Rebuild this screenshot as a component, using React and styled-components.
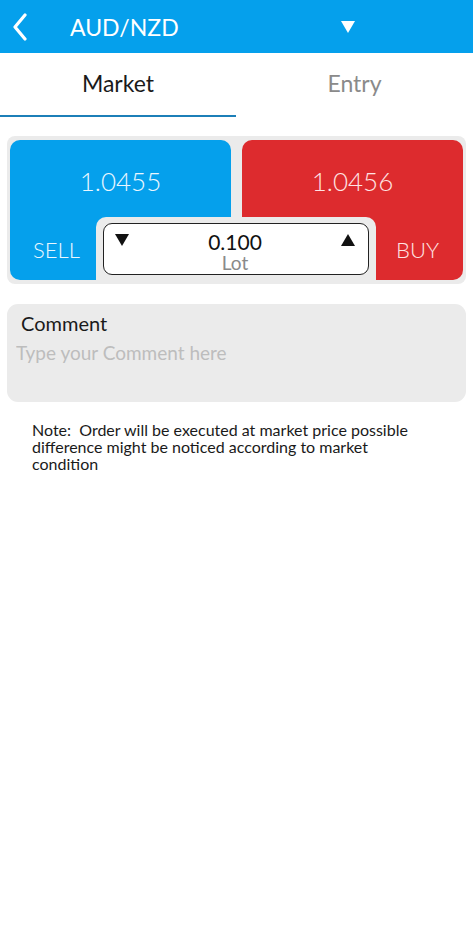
import React, { useState } from "react";
import styled, { createGlobalStyle } from "styled-components";

const GlobalStyle = createGlobalStyle`
  html, body {
    margin: 0;
    padding: 0;
    background: #fff;
  }
  body {
    font-family: Lato, "Open Sans", sans-serif;
  }
`;

const Page = styled.div`
  width: 473px;
  min-height: 931px;
  background: #fff;
`;

const Header = styled.header`
  height: 53px;
  background: #05a0ec;
  display: flex;
  align-items: center;
  color: #fff;
  padding-left: 12px;
  box-sizing: border-box;
`;

const BackBtn = styled.button`
  border: none;
  background: transparent;
  padding: 0;
  width: 16px;
  height: 28px;
  display: flex;
  align-items: center;
`;

const Title = styled.div`
  font-size: 23px;
  margin-left: 42px;
  width: 270px;
`;

const Tabs = styled.div`
  display: flex;
  height: 64px;
`;

const Tab = styled.div`
  flex: 0 0 ${(p) => p.$w}px;
  display: flex;
  align-items: center;
  justify-content: center;
  font-size: 23px;
  color: ${(p) => (p.$active ? "#1a1a1a" : "#8a8a8a")};
  border-bottom: 2px solid ${(p) => (p.$active ? "#1c7fb8" : "transparent")};
  box-sizing: border-box;
  padding-bottom: 2px;
  cursor: pointer;
`;

const TradePanel = styled.div`
  position: relative;
  margin: 19px 7px 0;
  padding: 4px 3px;
  background: #ebebeb;
  border-radius: 8px;
  display: flex;
  gap: 11px;
  height: 148px;
  box-sizing: border-box;
`;

const SideBox = styled.div`
  flex: 1;
  background: ${(p) => p.$color};
  border-radius: 10px;
  color: #fff;
  display: flex;
  flex-direction: column;
  justify-content: space-between;
`;

const Price = styled.div`
  font-size: 26px;
  font-weight: 300;
  text-align: center;
  margin-top: 25px;
  color: ${(p) => p.$tint};
`;

const SideLabel = styled.div`
  font-size: 22px;
  font-weight: 300;
  text-align: ${(p) => p.$align};
  padding: ${(p) => (p.$align === "left" ? "0 0 0 23px" : "0 24px 0 0")};
  margin-bottom: 17px;
  color: ${(p) => p.$tint};
`;

const LotWrap = styled.div`
  position: absolute;
  left: 89px;
  top: 81px;
  width: 280px;
  height: 67px;
  background: #ebebeb;
  border-radius: 10px 10px 0 0;
  padding: 6px 7px 0;
  box-sizing: border-box;
`;

const LotBox = styled.div`
  height: 52px;
  background: #fff;
  border: 1.5px solid #222;
  border-radius: 9px;
  box-sizing: border-box;
  display: flex;
  align-items: flex-start;
  justify-content: space-between;
  padding: 7px 12px 0 10px;
`;

const Arrow = styled.button`
  border: none;
  background: transparent;
  padding: 0;
  width: 16px;
  height: 14px;
  margin-top: 2px;
  display: flex;
  cursor: pointer;
`;

const LotValue = styled.div`
  display: flex;
  flex-direction: column;
  align-items: center;
`;

const LotNumber = styled.div`
  font-size: 21px;
  line-height: 21px;
  color: #111;
`;

const LotLabel = styled.div`
  font-size: 19px;
  line-height: 21px;
  color: #8a8a8a;
`;

const CommentBox = styled.div`
  margin: 20px 7px 0;
  height: 98px;
  background: #ebebeb;
  border-radius: 11px;
  padding: 7px 9px 0 9px;
  box-sizing: border-box;
`;

const CommentLabel = styled.div`
  font-size: 20px;
  color: #1a1a1a;
  padding-left: 5px;
`;

const CommentInput = styled.input`
  border: none;
  background: transparent;
  outline: none;
  width: 100%;
  font-family: inherit;
  font-size: 19px;
  padding: 0;
  margin-top: 6px;
  color: #333;
  &::placeholder {
    color: #bdbdbd;
  }
`;

const Note = styled.p`
  margin: 19px 0 0 32px;
  width: 392px;
  font-size: 16px;
  line-height: 17px;
  color: #1a1a1a;
`;

const Chevron = () => (
  <svg width="16" height="28" viewBox="0 0 16 28">
    <path d="M13 2 L3 14 L13 26" fill="none" stroke="#fff" strokeWidth="3.2" strokeLinecap="round" strokeLinejoin="round" />
  </svg>
);

const Triangle = ({ down, color = "#111", w = 16, h = 14 }) => (
  <svg width={w} height={h} viewBox="0 0 16 14">
    <path d={down ? "M1 1 H15 L8 13 Z" : "M1 13 H15 L8 1 Z"} fill={color} />
  </svg>
);

export default function App() {
  const [tab, setTab] = useState("market");
  const [lot, setLot] = useState(0.1);

  return (
    <Page>
      <GlobalStyle />
      <Header>
        <BackBtn><Chevron /></BackBtn>
        <Title>AUD/NZD</Title>
        <Triangle down color="#fff" w={16} h={14} />
      </Header>
      <Tabs>
        <Tab $w={236} $active={tab === "market"} onClick={() => setTab("market")}>Market</Tab>
        <Tab $w={237} $active={tab === "entry"} onClick={() => setTab("entry")}>Entry</Tab>
      </Tabs>
      <TradePanel>
        <SideBox $color="#05a0ec">
          <Price $tint="#eaf7ff">1.0455</Price>
          <SideLabel $align="left" $tint="#eaf7ff">SELL</SideLabel>
        </SideBox>
        <SideBox $color="#dd2b2e">
          <Price $tint="#ffe3e3">1.0456</Price>
          <SideLabel $align="right" $tint="#ffe3e3">BUY</SideLabel>
        </SideBox>
        <LotWrap>
          <LotBox>
            <Arrow onClick={() => setLot((v) => Math.max(0.01, v - 0.01))}><Triangle down /></Arrow>
            <LotValue>
              <LotNumber>{lot.toFixed(3)}</LotNumber>
              <LotLabel>Lot</LotLabel>
            </LotValue>
            <Arrow onClick={() => setLot((v) => v + 0.01)}><Triangle /></Arrow>
          </LotBox>
        </LotWrap>
      </TradePanel>
      <CommentBox>
        <CommentLabel>Comment</CommentLabel>
        <CommentInput placeholder="Type your Comment here" />
      </CommentBox>
      <Note>
        Note:&nbsp; Order will be executed at market price possible difference might be noticed according to market condition
      </Note>
    </Page>
  );
}
